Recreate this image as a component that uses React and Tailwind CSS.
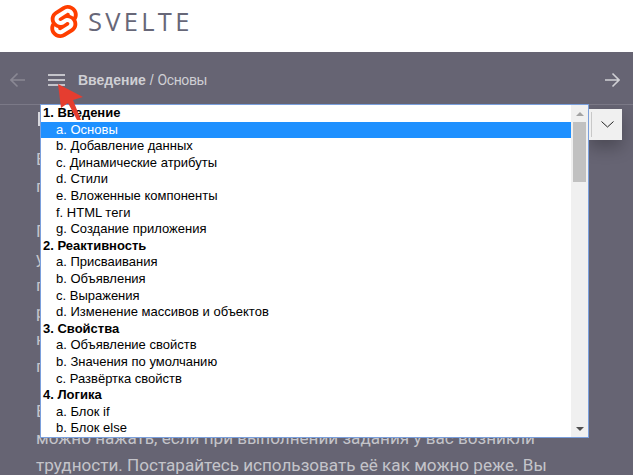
const sections = [
  { title: '1. Введение', items: ['a. Основы', 'b. Добавление данных', 'c. Динамические атрибуты', 'd. Стили', 'e. Вложенные компоненты', 'f. HTML теги', 'g. Создание приложения'] },
  { title: '2. Реактивность', items: ['a. Присваивания', 'b. Объявления', 'c. Выражения', 'd. Изменение массивов и объектов'] },
  { title: '3. Свойства', items: ['a. Объявление свойств', 'b. Значения по умолчанию', 'c. Развёртка свойств'] },
  { title: '4. Логика', items: ['a. Блок if', 'b. Блок else'] },
];

const paragraphs = [
  ['Если вы не можете найти ответ', 'после изучения материала'],
  ['Попробуйте выполнить задание', 'учебника самостоятельно, а затем', 'посмотрите, как оно решается.', 'результат можно сравнить', 'на панели справа, кнопку', 'показать решение'],
  ['В правом нижнем углу есть кнопка,', 'можно нажать, если при выполнении задания у вас возникли', 'трудности. Постарайтесь использовать её как можно реже. Вы'],
];

function Logo() {
  return (
    <svg width="28" height="33" viewBox="0 0 98 118" fill="none">
      <path
        d="M91.8 15.6C80.9-.1 59.2-4.7 43.6 5.2L16.1 22.8C8.6 27.5 3.4 35.2 1.9 43.9c-1.3 7.3-.2 14.8 3.3 21.3-2.4 3.6-4 7.6-4.7 11.8-1.6 8.9.5 18.1 5.7 25.4 11 15.7 32.6 20.3 48.2 10.4l27.5-17.5c7.5-4.7 12.7-12.4 14.2-21.1 1.3-7.3.2-14.8-3.3-21.3 2.4-3.6 4-7.6 4.7-11.8 1.7-9-.4-18.2-5.7-25.5"
        fill="#ff3e00"
      />
      <path
        d="M40.9 103.9c-8.9 2.3-18.2-1.2-23.4-8.7-3.2-4.4-4.4-9.9-3.5-15.3.2-.9.4-1.7.6-2.6l.5-1.6 1.4 1c3.3 2.4 6.9 4.2 10.8 5.4l1 .3-.1 1c-.1 1.4.3 2.9 1.1 4.1 1.6 2.3 4.4 3.4 7.1 2.7.6-.2 1.2-.4 1.7-.7L65.5 72c1.4-.9 2.3-2.2 2.6-3.8.3-1.6-.1-3.3-1-4.6-1.6-2.3-4.4-3.3-7.1-2.6-.6.2-1.2.4-1.7.7l-10.5 6.7c-1.7 1.1-3.6 1.9-5.6 2.4-8.9 2.3-18.2-1.2-23.4-8.7-3.1-4.4-4.4-9.9-3.4-15.3.9-5.2 4.1-9.9 8.6-12.7l27.5-17.5c1.7-1.1 3.6-1.9 5.6-2.5 8.9-2.3 18.2 1.2 23.4 8.7 3.2 4.4 4.4 9.9 3.5 15.3-.2.9-.4 1.7-.7 2.6l-.5 1.6-1.4-1c-3.3-2.4-6.9-4.2-10.8-5.4l-1-.3.1-1c.1-1.4-.3-2.9-1.1-4.1-1.6-2.3-4.4-3.3-7.1-2.6-.6.2-1.2.4-1.7.7L32.4 46.1c-1.4.9-2.3 2.2-2.6 3.8s.1 3.3 1 4.6c1.6 2.3 4.4 3.3 7.1 2.6.6-.2 1.2-.4 1.7-.7l10.5-6.7c1.7-1.1 3.6-1.9 5.6-2.5 8.9-2.3 18.2 1.2 23.4 8.7 3.2 4.4 4.4 9.9 3.5 15.3-.9 5.2-4.1 9.9-8.6 12.7l-27.5 17.5c-1.7 1.1-3.6 1.9-5.6 2.5"
        fill="#fff"
      />
    </svg>
  );
}

function RedArrow() {
  return (
    <svg className="absolute left-[56px] top-[83px]" width="30" height="37" viewBox="0 0 30 37" fill="none">
      <path d="M2 1 L27 14 L17 17 L25 37 L21 37 L12 20 L5 25 Z" fill="#e53d30" />
    </svg>
  );
}

function Option({ children, selected }) {
  return (
    <div className={`h-[16.6px] leading-[16.6px] pl-[15px] whitespace-pre ${selected ? 'bg-[#1e90ff] text-white' : 'text-black'}`}>
      {children}
    </div>
  );
}

function Listbox() {
  return (
    <div className="absolute left-[40px] top-[104px] w-[549px] h-[334px] flex border border-[#7a9fdc] bg-white overflow-hidden font-['Liberation_Sans',sans-serif] text-[13px]">
      <div className="flex-1">
        {sections.map((section) => (
          <div key={section.title}>
            <div className="h-[16.6px] leading-[16.6px] pl-[2px] font-bold text-black">{section.title}</div>
            {section.items.map((item) => (
              <Option key={item} selected={item === 'a. Основы'}>{item}</Option>
            ))}
          </div>
        ))}
      </div>
      <div className="w-[17px] bg-[#f0f0f0] flex flex-col items-center">
        <div className="h-[17px] flex items-center justify-center">
          <div className="w-0 h-0 border-x-[4px] border-x-transparent border-b-[4px] border-b-[#a3a3a3]"></div>
        </div>
        <div className="w-[13px] h-[60px] bg-[#c1c1c1]"></div>
        <div className="flex-1"></div>
        <div className="h-[17px] flex items-center justify-center">
          <div className="w-0 h-0 border-x-[4px] border-x-transparent border-t-[4px] border-t-[#505050]"></div>
        </div>
      </div>
    </div>
  );
}

export default function App() {
  return (
    <div className="relative w-[633px] h-[475px] overflow-hidden bg-[#666473] font-['Roboto',sans-serif]">
      <header className="h-[52px] bg-white flex items-start pl-[50px] pt-[5px] gap-[10px]">
        <Logo />
        <span className="text-[25.5px] leading-[32px] tracking-[3.3px] text-[#676778] font-['Open_Sans',sans-serif]">SVELTE</span>
      </header>

      <nav className="h-[53px] flex items-center border-b border-[#7b7987] pl-[10px] pr-[13px] pt-[4px] text-[#cfcfd4]">
        <svg width="16" height="16" viewBox="0 0 16 16" fill="none" stroke="#8a8894" strokeWidth="1.6">
          <path d="M15 8H1M7.5 1.5 1 8l6.5 6.5" />
        </svg>
        <svg className="ml-[22px]" width="17" height="14" viewBox="0 0 17 14" fill="#c4c4ca">
          <rect x="0" y="1" width="17" height="2" />
          <rect x="0" y="6" width="17" height="2" />
          <rect x="0" y="11" width="17" height="2" />
        </svg>
        <div className="ml-[13px] text-[14px] font-['Liberation_Sans',sans-serif]">
          <b>Введение</b> / <span className="tracking-[-0.4px] font-['Roboto',sans-serif]">Основы</span>
        </div>
        <svg className="ml-auto" width="16" height="16" viewBox="0 0 16 16" fill="none" stroke="#d0d0d5" strokeWidth="1.6">
          <path d="M1 8h14M8.5 1.5 15 8l-6.5 6.5" />
        </svg>
      </nav>

      <main className="pt-[41px] pl-[36px] pr-[20px] text-[#c4c4ca] text-[17.1px]">
        {paragraphs.map((lines, i) => (
          <p key={i} className="mb-[18px] leading-[27px] whitespace-nowrap">
            {lines.map((line) => (
              <span key={line} className="block">{line}</span>
            ))}
          </p>
        ))}
      </main>

      <div className="absolute left-[38px] top-[112px] w-[2px] h-[14px] bg-[#d8d8de]"></div>

      <div className="absolute left-[589px] top-[109px] w-[33px] h-[31px] bg-[#f0f0f0] shadow-[0_8px_16px_rgba(0,0,0,0.25)] flex items-center pl-[2px]">
        <div className="w-px h-[25px] bg-[#c8c8c8]"></div>
        <svg className="ml-[9px]" width="13" height="7" viewBox="0 0 13 7" fill="none" stroke="#222" strokeWidth="1">
          <path d="M0.5 0.5 6.5 6l6-5.5" />
        </svg>
      </div>

      <Listbox />
      <RedArrow />
    </div>
  );
}
